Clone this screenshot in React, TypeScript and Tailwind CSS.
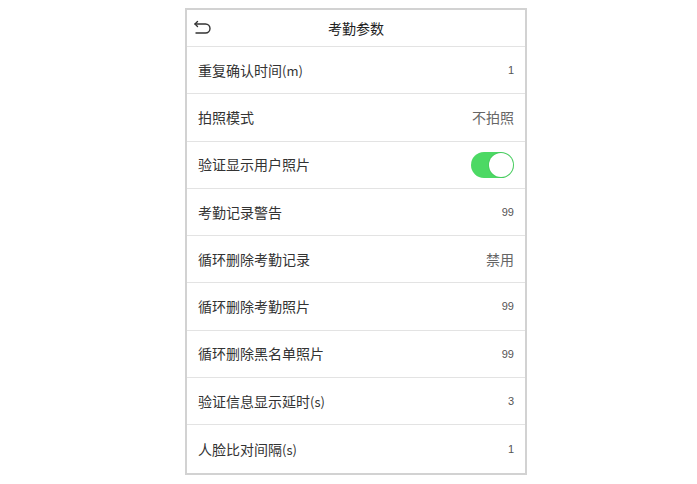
import React, { useState } from 'react';

type Row = {
  label: string;
  unit?: string;
  value?: string;
  toggle?: boolean;
  small?: boolean;
};

const rows: Row[] = [
  { label: '重复确认时间', unit: '(m)', value: '1', small: true },
  { label: '拍照模式', value: '不拍照' },
  { label: '验证显示用户照片', toggle: true },
  { label: '考勤记录警告', value: '99', small: true },
  { label: '循环删除考勤记录', value: '禁用' },
  { label: '循环删除考勤照片', value: '99', small: true },
  { label: '循环删除黑名单照片', value: '99', small: true },
  { label: '验证信息显示延时', unit: '(s)', value: '3', small: true },
  { label: '人脸比对间隔', unit: '(s)', value: '1', small: true },
];

const Toggle: React.FC<{ on: boolean; onChange: () => void }> = ({ on, onChange }) => (
  <button
    onClick={onChange}
    className={`relative w-[43px] h-[26px] rounded-full transition-colors ${on ? 'bg-[#4cd964]' : 'bg-[#e5e5e5]'}`}
  >
    <span
      className={`absolute top-[1px] w-[24px] h-[24px] rounded-full bg-white shadow-[0_0_0_1px_rgba(0,0,0,0.06)] transition-all ${on ? 'left-[18px]' : 'left-[1px]'}`}
    />
  </button>
);

export default function App() {
  const [showPhoto, setShowPhoto] = useState(true);

  return (
    <div
      className="w-[697px] h-[484px] bg-white pt-[8px]"
      style={{ fontFamily: '"Noto Sans CJK SC", "Noto Sans", sans-serif' }}
    >
      <div className="ml-[185px] w-[342px] border-2 border-[#d2d2d2] bg-white">
        {/* Header */}
        <div className="relative h-[37px] flex items-center justify-center border-b border-[#e3e3e3]">
          <button className="absolute left-[6px] top-[10px] text-[#333]">
            <svg width="20" height="16" viewBox="0 0 20 16" fill="none" stroke="currentColor" strokeWidth="1.4" strokeLinecap="round" strokeLinejoin="round">
              <path d="M4.5 1.5 2 4l2.5 2.5" />
              <path d="M2 4h10.5a4.5 4.5 0 0 1 0 9H3" />
            </svg>
          </button>
          <span className="text-[14px] text-[#222]">考勤参数</span>
        </div>

        {/* Rows */}
        {rows.map((row, i) => (
          <div
            key={row.label}
            className={`h-[47.3px] flex items-center justify-between pl-[11px] pr-[11px] ${i < rows.length - 1 ? 'border-b border-[#e3e3e3]' : ''}`}
          >
            <span className="text-[14px] text-[#333]">
              {row.label}
              {row.unit && <span className="text-[13px]">{row.unit}</span>}
            </span>
            {row.toggle ? (
              <Toggle on={showPhoto} onChange={() => setShowPhoto(!showPhoto)} />
            ) : (
              <span
                className={row.small ? 'text-[11px] text-[#555]' : 'text-[14px] text-[#666]'}
                style={row.small ? { fontFamily: '"Liberation Sans", sans-serif' } : undefined}
              >
                {row.value}
              </span>
            )}
          </div>
        ))}
      </div>
    </div>
  );
}
